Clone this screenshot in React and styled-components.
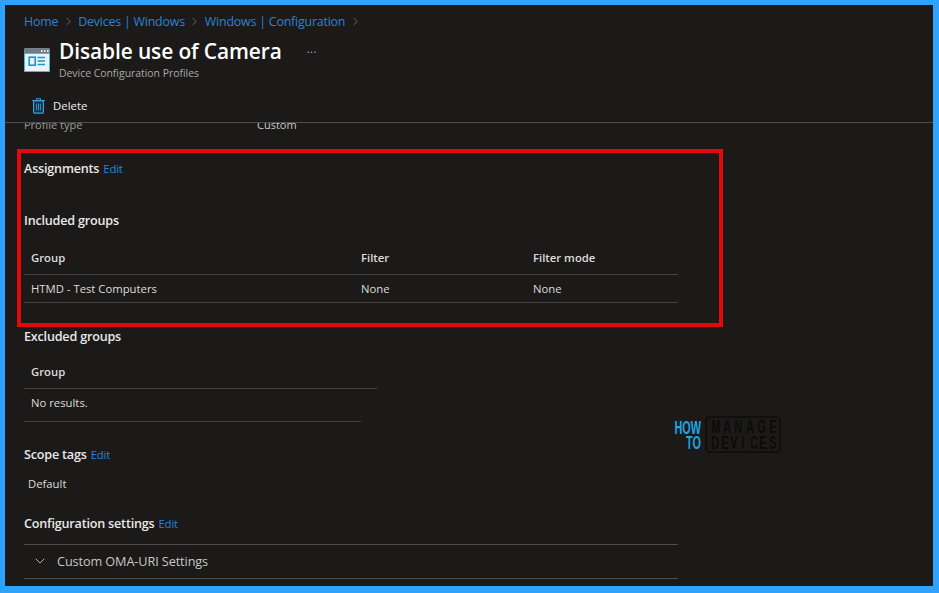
import styled, { createGlobalStyle } from 'styled-components';
import { ChevronRight, ChevronDown } from 'lucide-react';

const GlobalStyle = createGlobalStyle`
  html, body {
    margin: 0;
    padding: 0;
    background: #1b1a19;
  }
  body {
    font-family: "Open Sans", "Noto Sans", "Liberation Sans", sans-serif;
    color: #e6e6e6;
  }
`;

const Frame = styled.div`
  width: 939px;
  height: 593px;
  box-sizing: border-box;
  background: #1b1a19;
  border: solid #2ea2ff;
  border-width: 5px 6px 7px 5px;
  display: flex;
  flex-direction: column;
  overflow: hidden;
`;

const Header = styled.header`
  height: 118px;
  flex: none;
  box-sizing: border-box;
  padding: 7px 0 0 19px;
  border-bottom: 1px solid #4d4d4d;
`;

const Breadcrumb = styled.nav`
  display: flex;
  align-items: center;
  height: 18px;
  font-size: 12.4px;
  color: #2b82d8;
  letter-spacing: -0.2px;
  svg {
    margin: 0 3.5px;
    color: #8a8a8a;
  }
`;

const TitleRow = styled.div`
  display: flex;
  align-items: flex-start;
  margin-top: 8px;
`;

const TitleText = styled.div`
  margin-left: 9px;
`;

const Title = styled.h1`
  margin: 0;
  font-size: 20.9px;
  line-height: 26px;
  font-weight: 600;
  color: #fff;
  letter-spacing: -0.1px;
`;

const Subtitle = styled.div`
  font-size: 10.4px;
  line-height: 16px;
  margin-top: 1px;
  color: #a8a8a8;
`;

const More = styled.span`
  margin: 4px 0 0 25px;
  font-size: 11px;
  line-height: 14px;
  color: #b5b5b5;
  letter-spacing: 0.5px;
`;

const CommandBar = styled.div`
  display: flex;
  align-items: center;
  gap: 8px;
  margin: 17px 0 0 8px;
  font-size: 11.4px;
  line-height: 16px;
  color: #ececec;
`;

const Content = styled.main`
  position: relative;
  flex: 1;
  overflow: hidden;
  padding-left: 19px;
`;

const ClippedRow = styled.div`
  display: flex;
  margin-top: -6px;
  height: 16px;
  font-size: 11px;
  line-height: 16px;
  color: #9a9a9a;
`;

const ClippedLabel = styled.span`
  width: 233px;
`;

const ClippedValue = styled.span`
  color: #c8c8c8;
`;

const Section = styled.h2`
  margin: ${(p) => p.$top}px 0 0;
  font-size: 12.6px;
  line-height: 18px;
  font-weight: 600;
  color: #e8e8e8;
  letter-spacing: -0.2px;
`;

const EditLink = styled.span`
  margin-left: 4px;
  font-size: 11.4px;
  font-weight: 400;
  color: #2b82d8;
`;

const Table = styled.div`
  width: ${(p) => p.$width}px;
  margin-top: ${(p) => p.$top}px;
  font-size: 11.3px;
`;

const Row = styled.div`
  display: grid;
  grid-template-columns: 330px 172px 1fr;
  align-items: center;
  width: ${(p) => p.$width || '100%'};
  height: ${(p) => p.$height}px;
  padding-left: 7px;
  padding-bottom: ${(p) => p.$bottom || 0}px;
  box-sizing: border-box;
  border-bottom: 1px solid #424242;
  color: #dcdcdc;
  font-weight: ${(p) => (p.$head ? 600 : 400)};
`;

const TagValue = styled.div`
  margin: 12px 0 0 4px;
  font-size: 11.3px;
  line-height: 16px;
  color: #dcdcdc;
`;

const Accordion = styled.div`
  width: 654px;
  height: 35px;
  margin-top: 11px;
  box-sizing: border-box;
  border-top: 1px solid #4d4d4d;
  border-bottom: 1px solid #4d4d4d;
  display: flex;
  align-items: center;
  gap: 9px;
  padding: 0 0 2px 8px;
  font-size: 12.7px;
  color: #c8c8c8;
  letter-spacing: -0.1px;
`;

const Highlight = styled.div`
  position: absolute;
  left: 12px;
  top: 26px;
  width: 698px;
  height: 170px;
  border: 4px solid #e00a0a;
  pointer-events: none;
`;

const Watermark = styled.div`
  position: absolute;
  left: 656px;
  top: 293px;
  width: 120px;
  height: 37px;
  display: flex;
  align-items: center;
  justify-content: space-between;
  font-family: "Liberation Sans", sans-serif;
  font-weight: 700;
`;

const HowTo = styled.div`
  width: 40px;
  font-size: 16px;
  line-height: 15px;
  color: #1ba7e6;
  text-align: right;
`;

const HowLine = styled.div`
  transform: scale(0.68, 1.1);
  transform-origin: right center;
  white-space: nowrap;
`;

const ManageBox = styled.div`
  width: 76px;
  height: 37px;
  box-sizing: border-box;
  border: 2px solid #0f0f0f;
  border-radius: 5px;
  padding: 1px 3px;
  font-size: 16px;
  line-height: 16px;
  color: #0b0b0b;
`;

const WmLine = styled.div`
  display: flex;
  justify-content: space-between;
`;

const WmLetter = styled.span`
  display: inline-block;
  width: 8px;
  text-align: center;
  transform: scale(0.68, 1.1);
`;

const ListIcon = () => (
  <svg width="26" height="24" viewBox="0 0 26 24" style={{ flex: 'none', marginTop: 10 }}>
    <rect x="0.5" y="0.5" width="25" height="23" fill="#e8f4fb" />
    <rect x="0.5" y="0.5" width="25" height="5" fill="#6d7d88" />
    <rect x="17" y="2.2" width="1.6" height="1.6" fill="#fff" />
    <rect x="20" y="2.2" width="1.6" height="1.6" fill="#fff" />
    <rect x="23" y="2.2" width="1.6" height="1.6" fill="#fff" />
    <rect x="5.2" y="9.2" width="6" height="8" fill="none" stroke="#1f93cf" strokeWidth="1.6" />
    <path d="M13.5 9.5h7.5M13.5 13h7.5M13.5 16.5h7.5" stroke="#1f93cf" strokeWidth="1.5" />
    <rect x="0.5" y="5.5" width="25" height="18" fill="none" stroke="#53b3e0" strokeWidth="1" />
  </svg>
);

const TrashIcon = () => (
  <svg width="13" height="16" viewBox="0 0 13 16" style={{ flex: 'none' }}>
    <path d="M0 2.5h13M4.5 2.5V.7h4v1.8" fill="none" stroke="#3a9fe0" strokeWidth="1.1" />
    <rect x="1.6" y="2.8" width="9.8" height="12.4" rx="1" fill="#12303f" stroke="#3a9fe0" strokeWidth="1.2" />
    <path d="M4.6 5.5v7M6.5 5.5v7M8.4 5.5v7" stroke="#3a9fe0" strokeWidth="0.9" />
  </svg>
);

const Crumb = () => <ChevronRight size={13} strokeWidth={1.25} />;

const Letters = ({ text }) => (
  <WmLine>
    {text.split('').map((c, i) => (
      <WmLetter key={i}>{c}</WmLetter>
    ))}
  </WmLine>
);

export default function App() {
  return (
    <>
      <GlobalStyle />
      <Frame>
        <Header>
          <Breadcrumb>
            Home<Crumb />Devices | Windows<Crumb />Windows | Configuration<Crumb />
          </Breadcrumb>
          <TitleRow>
            <ListIcon />
            <TitleText>
              <Title>Disable use of Camera</Title>
              <Subtitle>Device Configuration Profiles</Subtitle>
            </TitleText>
            <More>...</More>
          </TitleRow>
          <CommandBar>
            <TrashIcon />
            Delete
          </CommandBar>
        </Header>
        <Content>
          <ClippedRow>
            <ClippedLabel>Profile type</ClippedLabel>
            <ClippedValue>Custom</ClippedValue>
          </ClippedRow>
          <Section $top={27}>
            Assignments<EditLink>Edit</EditLink>
          </Section>
          <Section $top={34}>Included groups</Section>
          <Table $width={654} $top={10}>
            <Row $head $height={35}>
              <span>Group</span>
              <span>Filter</span>
              <span>Filter mode</span>
            </Row>
            <Row $height={28}>
              <span>HTMD - Test Computers</span>
              <span>None</span>
              <span>None</span>
            </Row>
          </Table>
          <Section $top={25}>Excluded groups</Section>
          <Table $width={353} $top={8}>
            <Row $head $height={35}>
              <span>Group</span>
            </Row>
            <Row $height={33} $bottom={5} $width="337px">
              <span>No results.</span>
            </Row>
          </Table>
          <Section $top={24}>
            Scope tags<EditLink>Edit</EditLink>
          </Section>
          <TagValue>Default</TagValue>
          <Section $top={23}>
            Configuration settings<EditLink>Edit</EditLink>
          </Section>
          <Accordion>
            <ChevronDown size={16} strokeWidth={1.25} />
            Custom OMA-URI Settings
          </Accordion>
          <Highlight />
          <Watermark>
            <HowTo>
              <HowLine>HOW</HowLine>
              <HowLine>TO</HowLine>
            </HowTo>
            <ManageBox>
              <Letters text="MANAGE" />
              <Letters text="DEVICES" />
            </ManageBox>
          </Watermark>
        </Content>
      </Frame>
    </>
  );
}
